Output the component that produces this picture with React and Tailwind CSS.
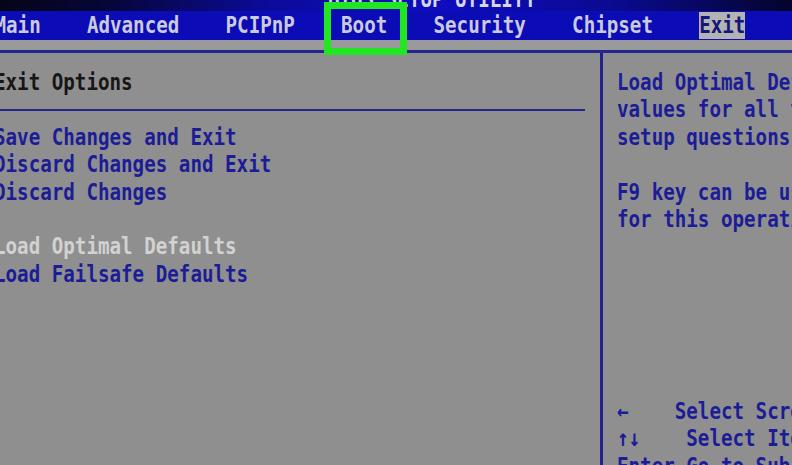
import React from 'react';

// BIOS setup screen, "Exit" page, rendered on a fixed character grid
const ROW = 'h-[27.4px] flex items-center';

function Txt({ children, className = '' }) {
  return (
    <span className={`inline-block whitespace-pre scale-y-[1.22] ${className}`}>{children}</span>
  );
}

const leftRows = [
  { text: 'Exit Options', color: 'text-[#161616]' },
  { rule: true },
  { text: 'Save Changes and Exit', color: 'text-[#1c1c96]' },
  { text: 'Discard Changes and Exit', color: 'text-[#1c1c96]' },
  { text: 'Discard Changes', color: 'text-[#1c1c96]' },
  { text: '' },
  { text: 'Load Optimal Defaults', color: 'text-[#d2d2d2]' },
  { text: 'Load Failsafe Defaults', color: 'text-[#1c1c96]' },
];

const helpRows = [
  'Load Optimal Defaults',
  'values for all the',
  'setup questions.',
  '',
  'F9 key can be used',
  'for this operation.',
  '', '', '', '', '', '',
  '\u2190    Select Screen',
  '\u2191\u2193    Select Item',
  'Enter Go to Sub Screen',
];

export default function App() {
  return (
    <div
      className="w-[792px] h-[465px] overflow-hidden bg-[#8f8f8f] flex flex-col text-[19.2px] font-bold leading-none"
      style={{ fontFamily: '"DejaVu Sans Mono", "Liberation Mono", monospace' }}
    >
      {/* title strip, mostly scrolled off the top */}
      <div className="h-[11px] shrink-0 overflow-hidden bg-[linear-gradient(90deg,#050518_0%,#06063a_14%,#0b0b9c_34%,#0d0dc0_55%,#0a0a90_78%,#04042c_100%)]">
        <div className="-mt-[14px] h-[27px] flex items-center pl-[328px] text-[#d6d6e6]">
          <Txt>BIOS SETUP UTILITY</Txt>
        </div>
      </div>

      {/* menu tabs */}
      <div className="h-[29px] shrink-0 bg-[#0c0cb6] flex items-center text-[#cacadc]">
        <div className="flex items-center -ml-[5.5px] h-full">
          <Txt>{'Main    Advanced    PCIPnP    '}</Txt>
          <span className="relative h-full flex items-center">
            <Txt>Boot</Txt>
            <span className="absolute -left-[17px] -right-[20px] -top-[9px] -bottom-[15px] border-[7px] border-[#22e622] z-10" />
          </span>
          <Txt>{'    Security    Chipset    '}</Txt>
          <span className="h-[27px] flex items-center bg-[#b3b3b3] text-[#15157a]">
            <Txt>Exit</Txt>
          </span>
        </div>
      </div>

      <div className="h-[10px] shrink-0 bg-[#9a9a9c]" />
      <div className="h-[3px] shrink-0 bg-[#25258e]" />

      <div className="flex-1 flex">
        {/* options list */}
        <div className="w-[600px] pt-[16px]">
          {leftRows.map((r, i) =>
            r.rule ? (
              <div key={i} className={ROW}>
                <div className="h-[2px] w-[585px] bg-[#25258e]" />
              </div>
            ) : (
              <div key={i} className={`${ROW} -ml-[6px] ${r.color || ''}`}>
                <Txt>{r.text}</Txt>
              </div>
            )
          )}
        </div>

        <div className="w-[3px] bg-[#22228c]" />

        {/* item help */}
        <div className="flex-1 pt-[16px] pl-[14px] text-[#1c1c96] overflow-hidden">
          {helpRows.map((t, i) => (
            <div key={i} className={ROW}>
              <Txt>{t}</Txt>
            </div>
          ))}
        </div>
      </div>
    </div>
  );
}
